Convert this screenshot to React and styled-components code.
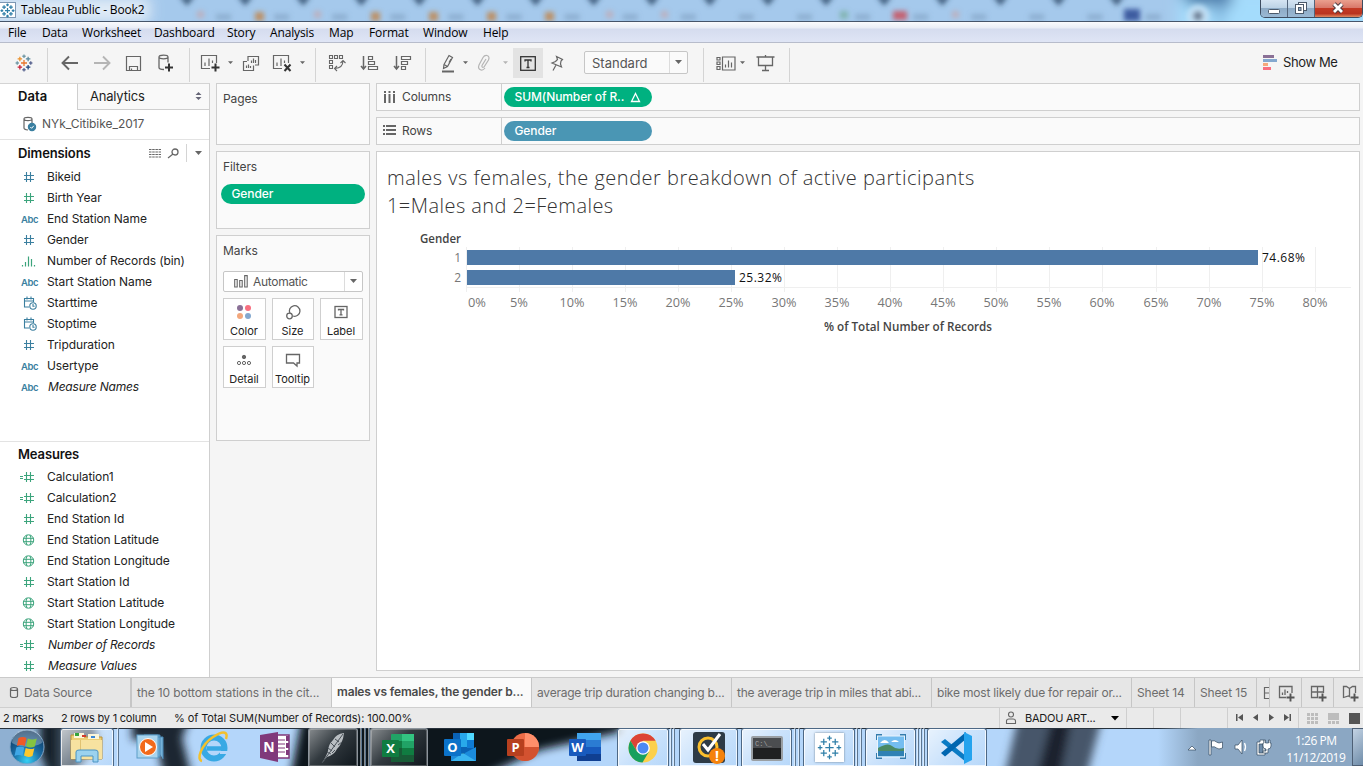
import React from "react";
import styled, { createGlobalStyle, css } from "styled-components";

const Global = createGlobalStyle`
  * { box-sizing: border-box; }
  body { margin: 0; background: #f5f5f5; overflow: hidden; }
  svg { display: block; flex: none; }
`;
const ui = `"Inter", "Liberation Sans", sans-serif`;
const sys = `"Open Sans", "Noto Sans", sans-serif`;

const Window = styled.div`
  width: 1363px; height: 766px; display: flex; flex-direction: column;
  font: 12px/16px ${ui}; color: #1e1e1e; white-space: nowrap; overflow: hidden;
`;

/* ---------- title bar and menu ---------- */
const TitleBar = styled.header`
  position: relative; height: 22px; flex: none; overflow: hidden; background: #a5c9ec;
  border-bottom: 1px solid #46556a; display: flex; justify-content: space-between;
`;
const Backdrop = styled.svg`position: absolute; inset: 0;`;
const Caption = styled.div`
  position: relative; display: flex; align-items: center; gap: 5px; padding-bottom: 1px;
  font: 12px/16px ${sys}; letter-spacing: -0.15px; color: #000;
`;
const AppIcon = styled.span`
  width: 16px; height: 16px; background: #fff; border: 1px solid #7c97b3; border-left: 0;
`;
const WinButtons = styled.div`
  position: relative; display: flex; height: 18px; width: 103px;
  border: 1px solid #3d4c60; border-top: 0; border-radius: 0 0 5px 5px; overflow: hidden;
`;
const WinButton = styled.span`
  width: ${(p) => p.$w}px; display: flex; align-items: center; justify-content: center;
  padding-bottom: ${(p) => p.$pb || 0}px; border-right: 1px solid #53657b;
  background: ${(p) => p.$close
    ? "linear-gradient(#eaa08e 0, #d9796a 45%, #c33a24 50%, #b93420 80%, #e08a60 100%)"
    : "linear-gradient(#d5e4f2 0, #bdd3e6 45%, #8eabc6 50%, #9ab8d4 100%)"};
  &:last-child { border-right: 0; }
`;
const MenuBar = styled.nav`
  height: 21px; flex: none; display: flex; padding: 2px 0 0 8px; color: #000;
  font: 12px/17px ${sys};
  background: linear-gradient(#fafbfd 0, #e9edf6 6px, #d5dcef 7px, #dfe5f5 100%);
  border-bottom: 1px solid #b7bccb;
`;
const MenuItem = styled.span`
  width: ${(p) => p.$w}px; letter-spacing: -0.14px;
`;

/* ---------- toolbar ---------- */
const Toolbar = styled.div`
  height: 40px; flex: none; display: flex; align-items: center; background: #f5f5f5;
`;
const ToolGroup = styled.div`
  height: 34px; margin-top: 4px; width: ${(p) => p.$w}px; display: flex; align-items: center;
  border-right: 1px solid #d4d4d4; padding-left: ${(p) => p.$pl || 0}px;
`;
const Tool = styled.span`
  width: ${(p) => p.$w}px; height: 30px; margin: -4px 0 0 ${(p) => p.$ml || 0}px;
  display: flex; align-items: center; justify-content: center;
  background: ${(p) => (p.$on ? "#e3e3e3" : "transparent")};
`;
const Select = styled.div`
  display: flex; align-items: center; height: ${(p) => p.$h}px; width: ${(p) => p.$w}px;
  border: 1px solid #c6c6c6; border-radius: 2px; background: ${(p) => p.$bg};
  font-size: ${(p) => p.$fs}px; color: #555; margin: ${(p) => p.$m || 0};
`;
const SelectText = styled.span`flex: 1; display: flex; align-items: center; gap: 5px; padding-left: ${(p) => p.$pl}px; letter-spacing: ${(p) => p.$ls || 0}px;`;
const SelectArrow = styled.span`
  width: 18px; height: 100%; border-left: 1px solid #dcdcdc; display: flex;
  align-items: center; justify-content: center;
`;
const ShowMe = styled.div`
  margin-left: auto; display: flex; align-items: center; gap: 6px; width: 100px;
  font-size: 13px; color: #1e1e1e; padding-bottom: 2px; letter-spacing: -0.4px;
`;

/* ---------- workspace ---------- */
const Workspace = styled.main`flex: 1; min-height: 0; display: flex; background: #f5f5f5;`;
const DataPane = styled.aside`
  width: 210px; flex: none; background: #fff; border-right: 1px solid #cfcfcf;
  border-top: 1px solid #d4d4d4; display: flex; flex-direction: column;
`;
const PaneTabs = styled.div`display: flex; height: 26px; flex: none;`;
const PaneTab = styled.div`
  display: flex; align-items: center; justify-content: space-between;
  font-size: 13px;
  ${(p) => p.$active
    ? css`width: 77px; padding: 0 0 2px 18px; font-weight: 600; color: #111; letter-spacing: 0.05px;`
    : css`flex: 1; padding: 0 7px 1px 12px; background: #f9f9f9; border-left: 1px solid #cfcfcf; border-bottom: 1px solid #cfcfcf; letter-spacing: -0.2px;`}
`;
const Source = styled.div`
  height: 30px; flex: none; display: flex; align-items: center; padding: 0 0 1px 22px; gap: 5px;
  color: #555; border-bottom: 1px solid #e3e3e3; font-size: 12px; letter-spacing: -0.03px;
`;
const FieldSection = styled.section`
  height: ${(p) => p.$h}px; flex: none; overflow: hidden; border-bottom: ${(p) => (p.$line ? "1px solid #e3e3e3" : "0")};
`;
const SectionHead = styled.h2`
  margin: 0; height: ${(p) => p.$h}px; display: flex; align-items: center; padding: 0 0 ${(p) => p.$pb || 0}px 18px;
  font-size: 13px; font-weight: 600; color: #111; letter-spacing: -0.12px;
`;
const HeadTools = styled.span`
  margin-left: auto; width: 60px; display: flex; align-items: center; gap: 6px;
`;
const HeadRule = styled.i`width: 1px; height: 18px; background: #d4d4d4; margin: 0 2px 0 1px;`;
const Field = styled.div`
  height: 21px; display: flex; align-items: center; color: #222;
  font-style: ${(p) => (p.$italic ? "italic" : "normal")};
  letter-spacing: ${(p) => (p.$italic ? -0.19 : -0.09)}px;
  text-indent: ${(p) => (p.$italic ? 1 : 0)}px;
`;
const FieldIcon = styled.span`width: 47px; display: flex; padding-left: 19px; text-indent: 0;`;
const Abc = styled.b`font: 600 9.500px/15px ${ui}; color: #3b7f9f; padding: 1px 0 0 2px; letter-spacing: -0.4px;`;

const Cards = styled.div`width: 154px; margin-left: 6px; display: flex; flex-direction: column; gap: 6px;`;
const Card = styled.section`
  height: ${(p) => p.$h}px; border: 1px solid #cfcfcf; background: #fafafa; padding: 7px 4px 0;
  color: #444;
`;
const CardTitle = styled.div`padding-left: 2px; height: 16px; letter-spacing: -0.1px;`;
const Pill = styled.div`
  height: 20px; width: ${(p) => p.$w}px; border-radius: 10px; background: ${(p) => p.$c}; color: #fff;
  padding: 0 11px 0 10.500px; display: flex; align-items: center; justify-content: space-between;
  margin-top: ${(p) => p.$mt || 0}px; font-weight: 500; letter-spacing: -0.1px;
`;
const MarkGrid = styled.div`
  display: grid; grid-template-columns: 43px 42px 43px; grid-auto-rows: 42px; gap: 6px;
  padding-left: 2px;
`;
const MarkButton = styled.div`
  border: 1px solid #cfcfcf; background: #fff; display: flex; flex-direction: column;
  align-items: center; justify-content: space-between; padding: 4px 1px 0 0;
  font-size: 11px; line-height: 15px; color: #222; letter-spacing: -0.03px;
`;
const Stage = styled.div`flex: 1; margin: 0 3px 6px 6px; display: flex; flex-direction: column; min-width: 0;`;
const Shelf = styled.div`
  height: 28px; margin-bottom: 6px; border: 1px solid #cfcfcf; background: #fafafa; display: flex; flex: none;
`;
const ShelfLabel = styled.div`
  width: 125px; border-right: 1px solid #cfcfcf; display: flex; align-items: center;
  gap: 6px; padding-left: 6px; color: #444; margin-right: 2px; letter-spacing: -0.1px;
`;
const Sheet = styled.section`flex: 1; border: 1px solid #cfcfcf; background: #fff; padding: 12px 0 0 10px;`;
const SheetTitle = styled.h1`
  margin: 0; font: 300 20px/28px ${sys}; color: #333; letter-spacing: ${(p) => p.$ls || 0}px;
`;
const Chart = styled.svg`margin: 0 0 0 -10px; font-family: ${sys}; font-size: 12px;`;

/* ---------- sheet tabs and status ---------- */
const SheetTabs = styled.div`
  height: 31px; flex: none; display: flex; background: #e6e6e6; border-top: 1px solid #cacaca;
  border-bottom: 1px solid #cfcfcf;
`;
const SheetTab = styled.div`
  width: ${(p) => p.$w}px; flex: none; border-right: ${(p) => p.$bw || 1}px solid #c6c6c6;
  padding: 0 0 ${(p) => (p.$active ? 1 : 0)}px ${(p) => p.$pl ?? 5}px;
  display: flex; align-items: center; gap: 5px; overflow: hidden;
  color: ${(p) => (p.$active ? "#4a4a4a" : "#6d6d6d")};
  background: ${(p) => (p.$active ? "#fafafa" : "transparent")};
  font-weight: ${(p) => (p.$active ? 600 : 400)}; letter-spacing: ${(p) => p.$ls || 0}px;
  &:last-child { border-right: 0; }
`;
const Status = styled.footer`
  height: 20px; flex: none; display: flex; background: #eaeaea; font-size: 11px; line-height: 20px;
  color: #1a1a1a; letter-spacing: -0.12px;
`;
const StatusText = styled.span`width: ${(p) => p.$w}px; padding-left: 3px; letter-spacing: ${(p) => p.$ls || -0.1}px;`;
const StatusCell = styled.div`
  width: ${(p) => p.$w}px; border-left: 1px solid #cfcfcf; display: flex; align-items: center;
  justify-content: space-between; padding: 0 ${(p) => p.$pr || 0}px 0 ${(p) => p.$pl || 0}px;
`;
const User = styled.span`display: flex; align-items: center; gap: 8px; letter-spacing: -0.25px;`;
const Push = styled.span`margin-left: auto;`;

/* ---------- taskbar ---------- */
const Taskbar = styled.div`
  height: 38px; flex: none; position: relative; background: #b4d6fa; display: flex; overflow: hidden;
`;
const Slot = styled.div`
  position: relative; width: ${(p) => p.$w}px; flex: none; display: flex;
`;
const TaskButton = styled.span`
  width: ${(p) => p.$w}px; height: 38px; display: flex; align-items: center; justify-content: center;
  ${(p) => p.$open && css`
    border: 1px solid ${p.$dark ? "#8c949c" : "#4d6885"}; border-bottom: 0; border-radius: 3px 3px 0 0;
    box-shadow: inset 0 0 0 1px rgba(255,255,255,${p.$dark ? 0.25 : 0.75});
    background: ${p.$dark
      ? "linear-gradient(135deg, rgba(255,255,255,.5), rgba(120,125,130,.35) 45%, rgba(20,25,30,.3))"
      : "linear-gradient(135deg, rgba(255,255,255,.7), rgba(255,255,255,.3) 50%, rgba(190,220,250,.3))"};
  `}
`;
const Stack = styled.span`
  width: ${(p) => p.$w || 5}px; height: 38px; border-right: 1px solid #5d7690;
  box-shadow: inset -1px 0 0 rgba(255,255,255,.5);
`;
const Tray = styled.div`
  position: relative; margin-left: auto; display: flex; align-items: center; height: 38px;
  background: linear-gradient(90deg, rgba(135,161,189,0), #8ba7c3 40px);
  width: 205px; padding-left: 30px;
`;
const Clock = styled.div`
  width: 76px; text-align: center; color: #fff; font: 12px/17px ${sys}; letter-spacing: -0.45px;
  padding-top: 3px; margin-left: 4px;
`;
const Desktop = styled.span`
  margin-left: auto; width: 12px; height: 38px; border: 1px solid #4e6076; border-right: 0;
  background: linear-gradient(135deg, #c3d3e4, #6f8ca9);
`;

/* ---------- icons ---------- */
const Ico = ({ w = 16, h = 16, c = "#666", sw = 1.3, f = "none", children }) => (
  <svg width={w} height={h} viewBox={`0 0 ${w} ${h}`} fill={f} stroke={c} strokeWidth={sw}>{children}</svg>
);
const Caret = ({ c = "#666", s = 8 }) => (
  <svg width={s} height={s / 2 + 1} viewBox="0 0 8 5"><path d="M0 0H8L4 4.5Z" fill={c} /></svg>
);
const plus = (cx, cy, r) => `M${cx - r} ${cy}h${2 * r}M${cx} ${cy - r}v${2 * r}`;
const TableauMark = ({ size = 16, mono, bold = 1.4 }) => {
  const col = mono ? Array(9).fill("#2f7fa8") : ["#e8762c", "#7199a6", "#5a6591", "#7199a6", "#5a6591", "#eb912c", "#59879b", "#c72037", "#1f457e"];
  const pts = [[12, 12, 4], [12, 3, 2.2], [12, 21, 2.2], [3, 12, 2.2], [21, 12, 2.2], [6.5, 6.5, 3], [17.5, 6.5, 3], [6.5, 17.5, 3], [17.5, 17.5, 3]];
  return (
    <svg width={size} height={size} viewBox="0 0 24 24" fill="none" strokeWidth={bold}>
      {pts.map(([x, y, r], i) => <path key={i} d={plus(x, y, r)} stroke={col[i]} />)}
    </svg>
  );
};
const Hash = ({ c, calc }) => (
  <Ico w={18} h={12} c={c} sw={1.1}>
    <path d="M7.500 1V11M11.500 1V11M5 4.500H15M5 8.500H15" />{calc && <path d="M1 5.500H4M1 7.500H4" strokeWidth="1" />}
  </Ico>
);
const GREEN = "#3ca47c";
const BLUE = "#3b7f9f";
const FieldGlyph = ({ k }) => {
  if (k === "abc") return <Abc>Abc</Abc>;
  if (k === "hb") return <Hash c={BLUE} />;
  if (k === "hg") return <Hash c={GREEN} />;
  if (k === "calc") return <Hash c={GREEN} calc />;
  if (k === "bin") return <Ico w={18} h={12} c={GREEN} sw={1.2}><path d="M3.500 10V11.500M6.500 7V11.500M9.500 1.500V11.500M12.500 4V11.500M15.500 10V11.500" /></Ico>;
  if (k === "date") return (
    <Ico w={18} h={14} c={BLUE} sw={1.1}><path d="M10 11H5.500V2.500H14.500V6M5.500 5H14.500M8 .5V3.500M12 .5V3.500" /><circle cx="14" cy="10" r="3.200" /><path d="M14 8V10.300H15.600" /></Ico>
  );
  return (
    <Ico w={18} h={12} c={GREEN} sw={1}><circle cx="9.500" cy="6" r="5.200" /><path d="M4.300 4.300H14.700M4.300 7.700H14.700M8 1C6.800 3.500 6.800 8.500 8 11M11 1C12.200 3.500 12.200 8.500 11 11" /></Ico>
  );
};
const SheetGlyph = ({ kind }) => (
  <Ico w={18} h={18} sw={1.3}>
    {kind === "chart" && <path d="M15 9V2.500H2.500V13.500H9M5.500 11V8.500M8 11V5.500M10.500 9V7" />}
    {kind === "dash" && <path d="M14.500 9V2.500H2.500V13.500H9M2.500 8H14.500M8.500 2.500V13.500" />}
    {kind === "story" && <path d="M9 13L7.500 12L2.500 13.500V2.500H5.500L8.500 4.500L11.500 2.500H14.500V9M8.500 4.500V12" />}
    <path d="M9.500 13.500H17.500M13.500 9.500V17.500" stroke="#555" strokeWidth="1.900" />
  </Ico>
);

/* ---------- content ---------- */
const menus = [["File", 34], ["Data", 40], ["Worksheet", 72], ["Dashboard", 73], ["Story", 43], ["Analysis", 59], ["Map", 40], ["Format", 54], ["Window", 60], ["Help", 40]];
const dims = [["hb", "Bikeid"], ["hg", "Birth Year"], ["abc", "End Station Name"], ["hb", "Gender"], ["bin", "Number of Records (bin)"], ["abc", "Start Station Name"], ["date", "Starttime"], ["date", "Stoptime"], ["hb", "Tripduration"], ["abc", "Usertype"], ["abc", "Measure Names", true]];
const measures = [["calc", "Calculation1"], ["calc", "Calculation2"], ["hg", "End Station Id"], ["geo", "End Station Latitude"], ["geo", "End Station Longitude"], ["hg", "Start Station Id"], ["geo", "Start Station Latitude"], ["geo", "Start Station Longitude"], ["calc", "Number of Records", true], ["hg", "Measure Values", true]];
const Fields = ({ items }) => items.map(([k, t, it]) => (
  <Field key={t} $italic={it}><FieldIcon><FieldGlyph k={k} /></FieldIcon>{t}</Field>
));

const TitleBackdrop = () => (
  <Backdrop width="1363" height="21">
    <defs>
      <filter id="soft" x="-10%" y="-50%" width="120%" height="200%"><feGaussianBlur stdDeviation="2.600" /></filter>
      <filter id="wide" x="-50%" y="-100%" width="200%" height="300%"><feGaussianBlur stdDeviation="7" /></filter>
    </defs>
    <g filter="url(#wide)">
      <rect x="1178" y="-10" width="220" height="50" fill="#a4dcfc" />
      <path d="M1176 -14H1232V6H1190Z" fill="#4a79a8" />
      <rect x="1216" y="4" width="8" height="20" fill="#6fa5d2" />
    </g>
    <g filter="url(#soft)">
      {Array.from({ length: 17 }, (_, i) => <path key={i} d={`M${179 + i * 58.1} -4h16l-8 10z`} fill="#33506f" opacity=".85" />)}
      {Array.from({ length: 17 }, (_, i) => <rect key={i} x={216 + i * 58.1} y="14" width="15" height="6" fill="#7f9fc0" opacity=".6" />)}
      {[201, 318, 610, 665, 956].map((x) => <rect key={x} x={x - 4} y="11" width="7" height="7" fill="#c6a5ab" opacity=".7" />)}
      {[260, 376, 434, 492, 550].map((x) => <rect key={x} x={x - 5} y="12" width="9" height="9" fill="#c0854c" opacity=".85" />)}
      <rect x="840" y="11" width="8" height="8" fill="#69a88c" opacity=".6" />
      <rect x="893" y="11" width="14" height="9" fill="#c85562" opacity=".9" />
      <rect x="1124" y="9" width="16" height="12" fill="#3c5ba0" />
      <circle cx="1198" cy="16" r="11" fill="#c2e0f6" />
      <circle cx="1198" cy="16" r="5" fill="#6d7e94" />
    </g>
    <rect x="-10" y="-2" width="160" height="24" fill="#e8f0f8" filter="url(#wide)" opacity=".9" />
  </Backdrop>
);

const TaskBackdrop = () => (
  <Backdrop width="1363" height="38">
    <defs><filter id="b4" x="-20%" y="-60%" width="140%" height="220%"><feGaussianBlur stdDeviation="4" /></filter></defs>
    <rect width="60" height="38" fill="#8fb0d2" />
    <g filter="url(#b4)">
      <path d="M40 -10H62V50H50L40 25Z" fill="#15202b" />
      <path d="M58 -10H92L98 14L70 50H58Z" fill="#3a4b5c" />
      <path d="M132 -10H190L182 10L192 50H164L156 12H132Z" fill="#1a2633" />
      <path d="M302 -10H620V4L540 22L480 50H290Z" fill="#10171f" />
      <path d="M1018 -10H1102L1086 50H1004Z" fill="#46566a" />
      <path d="M1052 -10H1072L1060 50H1036Z" fill="#1c242e" />
    </g>
    <rect width="1363" height="1" fill="#27313c" />
  </Backdrop>
);

const Letter = ({ x, y, s = 13, children }) => (
  <text x={x} y={y} fontSize={s} fontFamily="Open Sans" fontWeight="700" fill="#fff" textAnchor="middle">{children}</text>
);
const T = ({ w = 34, children }) => <svg width={w} height="34" viewBox={`0 0 ${w} 34`}>{children}</svg>;
const icons = {
  start: <T w={38}><defs><radialGradient id="orb" cx=".5" cy=".9" r=".9"><stop offset="0" stopColor="#35d0f5" /><stop offset=".45" stopColor="#1a6ea6" /><stop offset="1" stopColor="#0c2f55" /></radialGradient></defs>
    <circle cx="19" cy="17" r="17" fill="url(#orb)" stroke="#7fa6c8" /><path d="M4 13a15 14 0 0130 0c-9 5-21 5-30 0z" fill="#fff" opacity=".3" />
    <path d="M10.500 8q4.500-2 8 0l-1.700 8q-4-2-8 0z" fill="#ee5a28" /><path d="M19.800 8.500q4.500 2 9 0l-2 8q-4.500 2-8.700-.3z" fill="#85c441" /><path d="M8.300 17.500q4-2 8 0L14.500 26q-4-2-8 0z" fill="#3fa7e6" /><path d="M17.700 18q4.500 2 8.700.2L24.500 26q-4.500 2-8.500-.5z" fill="#fcc82d" /></T>,
  explorer: <T><path d="M1 4h9l2 2h20v22H1z" fill="#edce75" stroke="#b9923b" /><path d="M4 2h10v5H4zM18 3h11v5H18z" fill="#fbf6da" /><path d="M5 2h4v3H5z" fill="#35a33c" /><path d="M12 4h4v2h-4z" fill="#d43a2a" /><path d="M21 5h4v2h-4z" fill="#3c87d4" /><path d="M1 9h31v19H1z" fill="#f7e2a0" /><path d="M10 9h1v19h-1z" fill="#e0c272" /><path d="M6 31v-10q0-2 3-2h16q3 0 3 2v10h-5v-6H11v6z" fill="#9bd2ef" stroke="#4b94c4" /></T>,
  wmp: <T><path d="M11 5h16v22H11zM16 7h14v22" fill="#76b2d8" stroke="#4888b5" /><rect x="4" y="5" width="21" height="23" fill="#a9d4ed" stroke="#5d9dc7" /><circle cx="15" cy="17" r="8.500" fill="#f26a1b" stroke="#fff" /><path d="M12 12l8 5-8 5z" fill="#fff" /></T>,
  ie: <T w={38}><circle cx="20" cy="18" r="10.500" fill="none" stroke="#38a9e4" strokeWidth="6" /><path d="M13 18.500h19" stroke="#38a9e4" strokeWidth="4.500" /><path d="M26 21h8v3h-8z" fill="#b4d6fa" /><path d="M8 31C2 30 7 15 19 7S34 3 32 9" fill="none" stroke="#f3c02c" strokeWidth="2.500" /></T>,
  onenote: <T><path d="M18 5h13v23H18z" fill="#fff" stroke="#80397b" strokeWidth="1.500" /><path d="M19 10h8M19 14h8M19 18h8M19 22h8" stroke="#80397b" /><path d="M28 6h3v5h-3zM28 13h3v5h-3zM28 20h3v5h-3z" fill="#80397b" /><path d="M2 5L20 2v30L2 28z" fill="#80397b" /><Letter x={11} y={22} s={14}>N</Letter></T>,
  feather: <T><path d="M28 2Q20 3 17 9Q12 14 12 20Q11 24 6 32L11 26Q18 24 21 18Q27 12 28 2Z" fill="#b9bec2" /><path d="M27 3L6 32M12 17l4 3M15 12l4 4M19 8l4 3M11 21l4 2M16 22l3-3M22 14l4-3" stroke="#4a5259" fill="none" /></T>,
  excel: <T><rect x="9" y="3" width="23" height="28" rx="1" fill="#21a366" /><path d="M20 3h12v7H20z" fill="#33c481" /><path d="M9 10h11v7H9z" fill="#107c41" /><path d="M9 17h11v14H9z" fill="#185c37" /><path d="M20 17h12v7H20z" fill="#107c41" /><path d="M20 24h12v7H20z" fill="#185c37" /><rect x="0" y="9" width="17" height="17" rx="1" fill="#107c41" /><Letter x={8.500} y={22}>X</Letter></T>,
  outlook: <T><path d="M9 3h21v20H9z" fill="#0a62b5" /><path d="M16 3h7v7h-7zM16 10h7v7h-7z" fill="#28a8ea" /><path d="M23 3h7v7h-7z" fill="#50d9ff" /><path d="M23 10h7v8h-7z" fill="#0f7bd4" /><path d="M7 17l12 7 13-7v14H7z" fill="#1b8bdc" /><path d="M7 31l12-8 13 8z" fill="#39b4f0" /><rect x="0" y="9" width="17" height="17" rx="1" fill="#0b72c9" /><Letter x={8.500} y={22}>O</Letter></T>,
  ppt: <T><circle cx="19" cy="17" r="14" fill="#ed6c47" /><path d="M19 3a14 14 0 0114 14H19z" fill="#ff8f6b" /><path d="M5 17h28a14 14 0 01-28 0z" fill="#d35230" /><rect x="1" y="9" width="17" height="17" rx="1" fill="#b7401f" /><Letter x={9.500} y={22}>P</Letter></T>,
  word: <T><rect x="9" y="3" width="24" height="28" fill="#2b7cd3" /><path d="M9 3h24v7H9z" fill="#41a5ee" /><path d="M9 17h24v7H9z" fill="#185abd" /><path d="M9 24h24v7H9z" fill="#103f91" /><rect x="1" y="9" width="17" height="17" rx="1" fill="#185abd" /><Letter x={9.500} y={22}>W</Letter></T>,
  chrome: <T><circle cx="17" cy="17" r="14.500" fill="#fcd04b" /><path d="M4.400 9.800A14.500 14.500 0 0129.600 9.800L17 9.800 11 20.500Z" fill="#dc4437" /><path d="M4.400 9.800A14.500 14.500 0 0016.500 31.500L23 20.500H11Z" fill="#18a05e" /><circle cx="17" cy="17" r="6.800" fill="#fff" /><circle cx="17" cy="17" r="5.500" fill="#4b89f4" /></T>,
  norton: <T><rect x="1" y="1" width="32" height="31" rx="3" fill="#2e3b46" /><circle cx="16" cy="16" r="9" fill="none" stroke="#fbc02d" strokeWidth="3" /><path d="M11 13l5 6L28 3" fill="none" stroke="#fff" strokeWidth="3" /><circle cx="25" cy="25" r="8" fill="#f5820b" /><Letter x={25} y={30} s={14}>!</Letter></T>,
  cmd: <T><rect x="2" y="6" width="30" height="23" rx="1" fill="#1f2021" stroke="#9a9fa3" strokeWidth="2" /><path d="M3 7h28v10H3z" fill="#4b4d50" /><text x="5" y="15" fontSize="7" fill="#a4a4a4" fontFamily="Liberation Mono">C:\_</text></T>,
  picture: <T><path d="M2 3h6v6H2zM26 3h6v6h-6zM2 22h6v6H2zM26 22h6v6h-6z" fill="#347cad" /><rect x="3.500" y="5" width="27" height="21" fill="#74bdf0" stroke="#eaf4fb" /><path d="M4 17q10-6 14-2t12 2v8H4z" fill="#4a8a66" /><path d="M4 20h26v5H4z" fill="#2f81b4" /><path d="M6 12q5-6 9 0zM17 11q4-4 8 0z" fill="#fff" /></T>,
  vscode: <T><path d="M1 11l4-3 21 17v6z" fill="#0a7bc4" /><path d="M1 22l4 3.500L26 8V1z" fill="#0066b0" /><path d="M24 1l8 4v24l-8 4z" fill="#24a3ee" /></T>,
};

const tasks = [
  { k: "start", slot: 60, w: 54 }, { k: "explorer", slot: 60, w: 54, open: 1, stack: [5] }, { k: "wmp", slot: 62, w: 60 }, { k: "ie", slot: 62, w: 62 },
  { k: "onenote", slot: 64, w: 62 }, { k: "feather", slot: 62, w: 50, open: 1, dark: 1, stack: [4, 4, 4] }, { k: "excel", slot: 60, w: 58, open: 1, dark: 1 },
  { k: "outlook", slot: 62, w: 62 }, { k: "ppt", slot: 62, w: 62 }, { k: "word", slot: 63, w: 62 },
  { k: "chrome", slot: 62, w: 52, open: 1, stack: [3, 3] }, { k: "norton", slot: 62, w: 59, open: 1 }, { k: "cmd", slot: 62, w: 51, open: 1, stack: [4, 4] },
  { k: "tableau", slot: 62, w: 52, open: 1, stack: [3, 4] }, { k: "picture", slot: 62, w: 51, open: 1, stack: [3, 3, 3] }, { k: "vscode", slot: 60, w: 60, open: 1 },
];
const TabIcon = styled.span`width: 29px; height: 29px; background: #fff; box-shadow: 0 0 2px #6c7f92; display: flex; align-items: center; justify-content: center;`;

const Bars = () => {
  const x0 = 90, step = 53.04;
  return (
    <Chart width="981" height="120" viewBox="0 0 981 120">
      <text x="43" y="23" fontWeight="600" fill="#444" textLength="41" lengthAdjust="spacingAndGlyphs">Gender</text>
      {Array.from({ length: 17 }, (_, i) => {
        const x = Math.round(x0 + i * step) - 0.5;
        return (
          <g key={i}>
            <path d={`M${x} 27V72`} stroke="#efefef" />
            <text x={i ? x - 0.5 : x + 10.5} y="87" textAnchor="middle" fill="#777" textLength={i > 1 ? 25 : 18} lengthAdjust="spacingAndGlyphs">{i * 5}%</text>
          </g>
        );
      })}
      <path d="M89 67.500H974" stroke="#efefef" />
      <rect x="90" y="30" width="791" height="15" fill="#4e79a7" />
      <rect x="90" y="50" width="268" height="15" fill="#4e79a7" />
      <text x="84" y="42" textAnchor="end" fill="#777">1</text>
      <text x="84" y="62" textAnchor="end" fill="#777">2</text>
      <text x="885" y="42" fill="#111" textLength="43">74.68%</text>
      <text x="362" y="62" fill="#111" textLength="43">25.32%</text>
      <text x="447" y="111" fontWeight="600" fill="#444" textLength="168" lengthAdjust="spacingAndGlyphs">% of Total Number of Records</text>
    </Chart>
  );
};

export default function App() {
  return (
    <Window>
      <Global />
      <TitleBar>
        <TitleBackdrop />
        <Caption><AppIcon><TableauMark size={15} mono bold={2} /></AppIcon>Tableau Public - Book2</Caption>
        <WinButtons>
          <WinButton $w={28}><Ico w={14} h={12} c="#4c5a6b" sw={1}><rect x="1.500" y="6.500" width="11" height="4" rx="1" fill="#fff" /></Ico></WinButton>
          <WinButton $w={27} $pb={1}><Ico w={14} h={14} c="#4c5a6b" sw={1}><rect x="4.500" y="1.500" width="8" height="8" fill="#fff" /><rect x="1.500" y="3.500" width="8" height="9" fill="#fff" /><rect x="4.500" y="6.500" width="2.500" height="3" fill="#8eabc6" /></Ico></WinButton>
          <WinButton $w={48} $close $pb={2}><Ico w={14} h={12}><path d="M3 2L11 10M11 2L3 10" stroke="#4c3b40" strokeWidth="4.600" /><path d="M3 2L11 10M11 2L3 10" stroke="#fff" strokeWidth="2.800" /></Ico></WinButton>
        </WinButtons>
      </TitleBar>
      <MenuBar>{menus.map(([t, w]) => <MenuItem key={t} $w={w}>{t}</MenuItem>)}</MenuBar>

      <Toolbar>
        <ToolGroup $w={48}><Tool $w={47}><TableauMark size={18} bold={1.7} /></Tool></ToolGroup>
        <ToolGroup $w={142} $pl={6}>
          <Tool $w={32}><Ico w={18} h={16} sw={1.900}><path d="M1.500 8H17M8 1.500L1.500 8L8 14.500" /></Ico></Tool>
          <Tool $w={32}><Ico w={18} h={16} sw={1.900} c="#b5b5b5"><path d="M1 8H16.500M10 1.500L16.500 8L10 14.500" /></Ico></Tool>
          <Tool $w={31}><Ico w={17} h={17} sw={1.200}><path d="M1.500 1.500H15.500V15.500H1.500ZM4.500 15.500V11.500H12.500V15.500M6.500 15.500V13.500" /></Ico></Tool>
          <Tool $w={32}><Ico w={17} h={19}><path d="M2 3C2 .6 11 .6 11 3S2 5.400 2 3V13.500C2 15 4 15.500 7 15.500M11 3V8.500" /><path d="M8 13.500H16M12 9.500V17.500" stroke="#333" strokeWidth="2" /></Ico></Tool>
        </ToolGroup>
        <ToolGroup $w={126} $pl={4}>
          <Tool $w={32}><Ico w={20} h={18} sw={1.200}><path d="M10 14.500H1.500V1.500H16.500V9M5 12V8.500M9 12V4.500M12.500 9V6.500" /><path d="M11.500 13.500H19.500M15.500 9.500V17.500" stroke="#333" strokeWidth="2" /></Ico></Tool>
          <Tool $w={8}><Caret s={5} /></Tool>
          <Tool $w={34}><Ico w={18} h={17} sw={1.200}><path d="M6 6V1.500H16.500V10H13M9.500 8V5.500M11.500 8V3.500M13.500 8V5M5 6.500H1.500V15.500H11.500V10.500M4.500 13V10.500M6.500 13V9.500M8.500 13V11" /></Ico></Tool>
          <Tool $w={28}><Ico w={20} h={18} sw={1.200}><path d="M10 14.500H1.500V1.500H16.500V9M5 12V8.500M9 12V4.500M12.500 9V6.500" /><path d="M12.500 10.500L18.500 17M18.500 10.500L12.500 17" stroke="#333" strokeWidth="2" /></Ico></Tool>
          <Tool $w={12}><Caret s={5} /></Tool>
        </ToolGroup>
        <ToolGroup $w={110} $pl={5}>
          <Tool $w={32}><Ico w={18} h={18} sw={1.100}><path d="M1.500 1.500h3v3h-3zM6.500 1.500h3v3h-3zM11.500 1.500h3v3h-3zM1.500 6.500h3v3h-3zM1.500 11.500h3v3h-3zM7 14.500Q15 14 15 6.500M12.500 9L15 6.500L17.500 9M9 12L6.500 14.500L9 17" /></Ico></Tool>
          <Tool $w={33}><Ico w={19} h={16} sw={1.200}><path d="M3.500 1V14M1 11L3.500 14L6 11" strokeWidth="1.500" /><path d="M8.500 1.500h4v3h-4zM8.500 6.500h6v3h-6zM8.500 11.500h9v3h-9z" /></Ico></Tool>
          <Tool $w={32}><Ico w={19} h={16} sw={1.200}><path d="M3.500 1V14M1 11L3.500 14L6 11" strokeWidth="1.500" /><path d="M8.500 1.500h9v3h-9zM8.500 6.500h6v3h-6zM8.500 11.500h4v3h-4z" /></Ico></Tool>
        </ToolGroup>
        <ToolGroup $w={278} $pl={5}>
          <Tool $w={33}><Ico w={14} h={19} sw={1.200}><path d="M3 10.500L8 1.500L11.500 3.500L6.500 12.500L2.500 14.500ZM3 10.500L6.500 12.500M8 8.500L10 5" /><path d="M1 17.500H13" strokeWidth="2" /></Ico></Tool>
          <Tool $w={3}><Caret s={5} /></Tool>
          <Tool $w={34}><Ico w={14} h={18} c="#b5b5b5" sw={1.200}><path d="M9 5L5 11.500Q4.500 14 7 13L11.500 6Q13 2.500 10 1.500Q7.500 1 6 3.500L2 11Q.5 15 4 16Q6 16.500 8 14" /></Ico></Tool>
          <Tool $w={8}><Caret s={5} c="#b5b5b5" /></Tool>
          <Tool $w={30} $ml={4} $on><Ico w={16} h={15} c="#333"><rect x=".7" y=".7" width="14.600" height="13.600" /><path d="M5 5.500V4H11V5.500M8 4V11.500M6.500 11.500H9.500" /></Ico></Tool>
          <Tool $w={28}><Ico w={14} h={17} sw={1.200}><path d="M6.500 1.500L12.500 4.500L11 6L10.500 9L11.500 12L2 8L5.500 6.500L7.500 4.500ZM6 10L3 15.500" /></Ico></Tool>
          <Select $w={104} $h={23} $bg="#fafafa" $fs={13} $m="0 0 5px 13px"><SelectText $pl={7} $ls={0}>Standard</SelectText><SelectArrow><Caret s={7} /></SelectArrow></Select>
        </ToolGroup>
        <ToolGroup $w={86} $pl={11}>
          <Tool $w={21}><Ico w={20} h={15} sw={1.200}><path d="M1 1.500h3v2.500h-3zM1 6h3v2.500h-3zM1 10.500h3v3h-3zM6.500 1H19V14H6.500zM9.500 11.500V8.500M12.500 11.500V4.500M15.500 11.500V6.500" /></Ico></Tool>
          <Tool $w={13}><Caret s={5} /></Tool>
          <Tool $w={33}><Ico w={19} h={17}><path d="M.5 2H18.500M2.500 2V10.500H16.500V2M9.500 0V2M9.500 10.500V15.500M6 15.500H13" /></Ico></Tool>
        </ToolGroup>
        <ShowMe><svg width="14" height="15"><path d="M0 0h11v3H0z" fill="#8a7096" /><path d="M0 4h14v3H0z" fill="#84a8cf" /><path d="M0 8h5v3H0z" fill="#f5a87b" /><path d="M0 12h8v3H0z" fill="#f86f80" /></svg>Show Me</ShowMe>
      </Toolbar>

      <Workspace>
        <DataPane>
          <PaneTabs>
            <PaneTab $active>Data</PaneTab>
            <PaneTab>Analytics<svg width="7" height="8"><path d="M.5 3L3.500 0L6.500 3ZM.5 5L3.500 8L6.500 5Z" fill="#667" /></svg></PaneTab>
          </PaneTabs>
          <Source><Ico w={15} h={16} sw={1.200}><path d="M2 3C2 .8 10 .8 10 3S2 5.200 2 3V12Q2 13.500 6 14M10 3V7" /><circle cx="10" cy="11" r="3.600" fill="#3a7fa0" stroke="#3a7fa0" /><path d="M8.300 11L9.600 12.300L11.800 9.800" stroke="#fff" strokeWidth="1" /></Ico>NYk_Citibike_2017</Source>
          <FieldSection $h={302} $line>
            <SectionHead $h={26}>Dimensions
              <HeadTools>
                <Ico w={12} h={10}><path d="M0 1.500H12M0 4H12M0 6.500H12M0 9H12" strokeWidth="1.200" strokeDasharray="2.500 .7" /></Ico>
                <svg width="12" height="11" viewBox="-1 0 12 11" fill="none" stroke="#666" strokeWidth="1.300"><circle cx="7" cy="4" r="3" /><path d="M5 6L0 10" /></svg>
                <HeadRule /><Caret s={7} />
              </HeadTools>
            </SectionHead>
            <Fields items={dims} />
          </FieldSection>
          <FieldSection $h={236}><SectionHead $h={24} $pb={1}>Measures</SectionHead><Fields items={measures} /></FieldSection>
        </DataPane>

        <Cards>
          <Card $h={62}><CardTitle>Pages</CardTitle></Card>
          <Card $h={78}><CardTitle>Filters</CardTitle><Pill $w={144} $mt={9} $c="#00b180">Gender</Pill></Card>
          <Card $h={206}>
            <CardTitle>Marks</CardTitle>
            <Select $w={140} $h={21} $bg="#fff" $fs={12} $m="12px 0 6px 2px">
              <SelectText $pl={10} $ls={-0.3}><Ico w={14} h={14} sw={1.100}><path d="M.7 4.500h2.500v7.500h-2.500zM5.700 5.500h2.500v6.500h-2.500zM10.700 .6h2.500v11.400h-2.500z" /></Ico>Automatic</SelectText>
              <SelectArrow><Caret s={7} /></SelectArrow>
            </Select>
            <MarkGrid>
              <MarkButton><svg width="16" height="18"><circle cx="4" cy="5" r="3" fill="#8a7096" /><circle cx="12" cy="5" r="3" fill="#f86f80" /><circle cx="4" cy="13" r="3" fill="#f3a77c" /><circle cx="12" cy="13" r="3" fill="#84a8cf" /></svg>Color</MarkButton>
              <MarkButton><Ico w={16} h={18}><path d="M5 10.500A5.300 5.300 0 1 1 8 13" /><circle cx="4.500" cy="13" r="2.800" /></Ico>Size</MarkButton>
              <MarkButton><Ico w={16} h={18}><rect x="2" y="3.500" width="12" height="11" /><path d="M5.500 7.500V6.500H10.500V7.500M8 6.500V11.800M6.500 11.800H9.500" /></Ico>Label</MarkButton>
              <MarkButton><Ico w={16} h={18} sw={1}><circle cx="8" cy="6" r="1.700" fill="#666" /><circle cx="3" cy="12" r="1.600" /><circle cx="8" cy="12" r="1.600" /><circle cx="13" cy="12" r="1.600" /></Ico>Detail</MarkButton>
              <MarkButton><Ico w={16} h={18}><path d="M1.500 3.500H14.500V12H12V15L8.500 12H1.500Z" /></Ico>Tooltip</MarkButton>
            </MarkGrid>
          </Card>
        </Cards>

        <Stage>
          <Shelf>
            <ShelfLabel><Ico w={13} h={12}><path d="M2 0V2M2 3V12M6.500 0V2M6.500 3V12M11 0V2M11 3V12" strokeWidth="2" /></Ico>Columns</ShelfLabel>
            <Pill $w={148} $mt={3} $c="#00b180">SUM(Number of R..<Ico w={11} h={11} c="#fff"><path d="M5.500 1.500L9.500 9.500H1.500Z" /></Ico></Pill>
          </Shelf>
          <Shelf>
            <ShelfLabel><Ico w={13} h={12}><path d="M0 1H2M3 1H13M0 5H2M3 5H13M0 9H2M3 9H13" strokeWidth="2" /></Ico>Rows</ShelfLabel>
            <Pill $w={148} $mt={3} $c="#4a96b4">Gender</Pill>
          </Shelf>
          <Sheet>
            <SheetTitle $ls={0.51}>males vs females, the gender breakdown of active participants</SheetTitle>
            <SheetTitle $ls={0.45}>1=Males and 2=Females</SheetTitle>
            <Bars />
          </Sheet>
        </Stage>
      </Workspace>

      <SheetTabs>
        <SheetTab $w={132} $bw={2} $pl={9} $ls={-0.15}><Ico w={10} h={13} sw={1.200}><path d="M1.500 3C1.500 1 8.500 1 8.500 3V10C8.500 12 1.500 12 1.500 10ZM1.500 3C1.500 5 8.500 5 8.500 3" /></Ico>Data Source</SheetTab>
        <SheetTab $w={200} $ls={-0.13}>the 10 bottom stations in the cit...</SheetTab>
        <SheetTab $w={200} $active $ls={-0.16}>males vs females, the gender b...</SheetTab>
        <SheetTab $w={200} $ls={-0.22}>average trip duration changing b...</SheetTab>
        <SheetTab $w={200} $ls={-0.2}>the average trip in miles that abi...</SheetTab>
        <SheetTab $w={200} $ls={-0.2}>bike most likely due for repair or...</SheetTab>
        <SheetTab $w={63} $ls={-0.15}>Sheet 14</SheetTab>
        <SheetTab $w={62} $ls={-0.15}>Sheet 15</SheetTab>
        <SheetTab $w={13} $pl={6}><Ico w={12} h={14} sw={1.200}><path d="M10 1.500H1.500V12.500H10M1.500 7H10" /></Ico></SheetTab>
        <SheetTab $w={32} $pl={7}><SheetGlyph kind="chart" /></SheetTab>
        <SheetTab $w={32} $pl={7}><SheetGlyph kind="dash" /></SheetTab>
        <SheetTab $w={29} $pl={7}><SheetGlyph kind="story" /></SheetTab>
      </SheetTabs>
      <Status>
        <StatusText $w={58} $ls={-0.2}>2 marks</StatusText><StatusText $w={113} $ls={-0.22}>2 rows by 1 column</StatusText><StatusText>% of Total SUM(Number of Records): 100.00%</StatusText>
        <Push />
        <StatusCell $w={127} $pl={5} $pr={7}><User><Ico w={12} h={14} sw={1.100}><circle cx="6" cy="3.500" r="2.500" /><path d="M1.500 12.500V10Q1.500 8 4 8H8Q10.500 8 10.500 10V12.500Z" /></Ico>BADOU ART...</User><Caret c="#000" s={8} /></StatusCell>
        <StatusCell $w={27} /><StatusCell $w={27} /><StatusCell $w={47} />
        <StatusCell $w={71} $pl={8} $pr={8}><svg width="55" height="8" fill="#555"><path d="M0 0h1.500v7H0zM7 0v7L2 3.500zM22 0v7L17 3.500zM33 0v7L38 3.500zM48 0v7L53 3.500zM53.500 0h1.500v7h-1.500z" /></svg></StatusCell>
        <StatusCell $w={65} $pl={8} $pr={3}>
          <svg width="11" height="11" fill="#bdbdbd"><path d="M0 0h3v3H0zM4 0h3v3H4zM8 0h3v3H8zM0 4h3v3H0zM4 4h3v3H4zM8 4h3v3H8zM0 8h3v3H0zM4 8h3v3H4zM8 8h3v3H8z" /></svg>
          <svg width="11" height="11" fill="#bdbdbd"><path d="M0 0h11v7H0zM0 8h3v3H0zM4 8h3v3H4zM8 8h3v3H8z" /></svg>
          <svg width="11" height="11"><path d="M0 0h11v11H0z" fill="#555" /></svg>
        </StatusCell>
      </Status>

      <Taskbar>
        <TaskBackdrop />
        {tasks.map((t) => (
          <Slot key={t.k} $w={t.slot}>
            <TaskButton $w={t.w} $open={t.open} $dark={t.dark}>{t.k === "tableau" ? <TabIcon><TableauMark size={25} mono bold={1.2} /></TabIcon> : icons[t.k]}</TaskButton>
            {(t.stack || []).map((w, i) => <Stack key={i} $w={w} />)}
          </Slot>
        ))}
        <Tray>
          <svg width="88" height="20" viewBox="0 0 88 20" stroke="#354a60" strokeWidth=".7" fill="#fff">
            <path d="M0 13L4 9L8 13Z" /><path d="M21 3h2v15h-2zM23.500 4q3-1 5 1t6 0v6q-4 2-6 0t-5-1z" />
            <path d="M47 8h3l4-5v14l-4-5h-3z" /><path d="M56.500 6q2 4 0 8" fill="none" stroke="#fff" strokeWidth="1.300" />
            <path d="M69 5h3V3h4v2h1v13h-8z" /><path d="M71 7h4v9h-4z" fill="#6f8ca9" /><path d="M76 3h1.500v3h3V3H82v3h1v3q0 3-3 3v4h-5v-2h3v-2q-3 0-3-3V6h1z" />
          </svg>
          <Clock>1:26 PM<br />11/12/2019</Clock>
          <Desktop />
        </Tray>
      </Taskbar>
    </Window>
  );
}
